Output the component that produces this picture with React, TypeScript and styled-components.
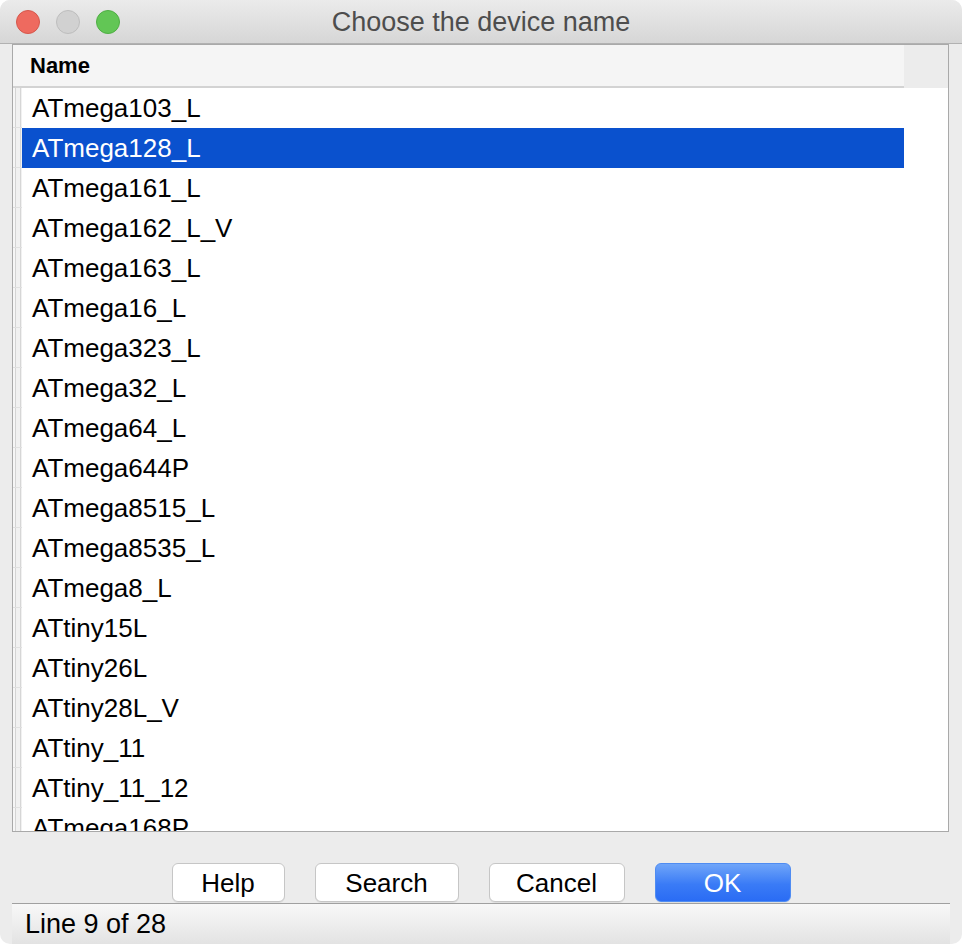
import React from "react";
import styled, { createGlobalStyle } from "styled-components";

const GlobalStyle = createGlobalStyle`
  html, body {
    margin: 0;
    padding: 0;
    background: #ffffff;
  }
  body {
    font-family: "Liberation Sans", Arial, Helvetica, sans-serif;
    -webkit-font-smoothing: antialiased;
  }
`;

const Window = styled.div`
  width: 962px;
  height: 944px;
  display: flex;
  flex-direction: column;
  background: #ececec;
  border-radius: 10px;
  overflow: hidden;
  font-family: "Liberation Sans", Arial, Helvetica, sans-serif;
`;

const TitleBar = styled.div`
  height: 43px;
  flex: none;
  display: grid;
  grid-template-columns: 120px 1fr 120px;
  align-items: center;
  background: linear-gradient(to bottom, #ebebeb 0%, #d6d6d6 100%);
  border-bottom: 1px solid #b1b1b1;
`;

const Lights = styled.div`
  display: flex;
  gap: 16px;
  padding-left: 16px;
  align-items: center;
`;

const Light = styled.span<{ $fill: string; $edge: string }>`
  width: 24px;
  height: 24px;
  border-radius: 50%;
  box-sizing: border-box;
  background: ${(p) => p.$fill};
  border: 1px solid ${(p) => p.$edge};
`;

const Title = styled.div`
  text-align: center;
  font-size: 27px;
  line-height: 43px;
  padding-top: 1px;
  color: #4d4d4d;
  white-space: nowrap;
`;

const Body = styled.div`
  flex: 1;
  display: flex;
  flex-direction: column;
  min-height: 0;
`;

const Table = styled.div`
  margin: 0 13px 0 12px;
  height: 788px;
  box-sizing: border-box;
  border: 1px solid #a9a9a9;
  background: #ffffff;
  display: flex;
  flex-direction: column;
  overflow: hidden;
`;

const HeaderRow = styled.div`
  height: 43px;
  flex: none;
  display: flex;
  background: #ececec;
`;

const HeaderCell = styled.div`
  width: 891px;
  box-sizing: border-box;
  height: 43px;
  background: #f5f5f5;
  border-bottom: 2px solid #d3d3d3;
  padding-left: 17px;
  font-size: 22px;
  font-weight: 600;
  line-height: 41px;
  color: #000;
`;

const Rows = styled.div`
  flex: 1;
  overflow: hidden;
`;

const Row = styled.div`
  display: flex;
  height: 40px;
`;

const RowHeader = styled.div`
  width: 9px;
  flex: none;
  box-sizing: border-box;
  background: linear-gradient(
    to right,
    #f6f6f6 0 2px,
    #d4d4d4 2px 3px,
    #f1f1f1 3px 7px,
    #d6d6d6 7px 8px,
    #f1f1f1 8px 9px
  );
  border-bottom: 1px solid #e0e0e0;
`;

const Cell = styled.div<{ $selected: boolean }>`
  width: 882px;
  flex: none;
  padding-left: 10px;
  box-sizing: border-box;
  font-size: 26px;
  line-height: 40px;
  white-space: nowrap;
  color: ${(p) => (p.$selected ? "#ffffff" : "#000000")};
  background: ${(p) => (p.$selected ? "#0a51ce" : "transparent")};
`;

const ButtonBar = styled.div`
  height: 71px;
  flex: none;
  display: flex;
  justify-content: center;
  align-items: flex-end;
  gap: 30px;
  padding-bottom: 1px;
  box-sizing: border-box;
`;

const Button = styled.button<{ $w: number; $primary?: boolean }>`
  width: ${(p) => p.$w}px;
  height: 39px;
  box-sizing: border-box;
  border-radius: 6px;
  font-family: "Liberation Sans", Arial, Helvetica, sans-serif;
  font-size: 26px;
  line-height: 35px;
  padding: 2px 0 0;
  text-align: center;
  cursor: default;
  color: ${(p) => (p.$primary ? "#ffffff" : "#000000")};
  border: 1px solid ${(p) => (p.$primary ? "#4f8cf2" : "#c6c6c6")};
  background: ${(p) =>
    p.$primary
      ? "linear-gradient(to bottom, #6fa5f9 0%, #3a7bf6 55%, #2a6cf4 100%)"
      : "#ffffff"};
  box-shadow: 0 1px 0 rgba(0, 0, 0, 0.06);
`;

const StatusBar = styled.div`
  height: 41px;
  flex: none;
  margin: 0 12px;
  box-sizing: border-box;
  border-top: 1px solid #a0a0a0;
  background: linear-gradient(to bottom, #f8f8f8 0%, #e3e3e3 100%);
  padding-left: 13px;
  font-size: 27px;
  line-height: 40px;
  color: #000;
  overflow: hidden;
`;

const devices = [
  "ATmega103_L",
  "ATmega128_L",
  "ATmega161_L",
  "ATmega162_L_V",
  "ATmega163_L",
  "ATmega16_L",
  "ATmega323_L",
  "ATmega32_L",
  "ATmega64_L",
  "ATmega644P",
  "ATmega8515_L",
  "ATmega8535_L",
  "ATmega8_L",
  "ATtiny15L",
  "ATtiny26L",
  "ATtiny28L_V",
  "ATtiny_11",
  "ATtiny_11_12",
  "ATmega168P",
];

const selectedIndex = 1;

export default function App() {
  return (
    <>
      <GlobalStyle />
      <Window>
        <TitleBar>
          <Lights>
            <Light $fill="#ee6a5f" $edge="#d5574c" />
            <Light $fill="#d1d1d1" $edge="#bdbdbd" />
            <Light $fill="#62c655" $edge="#4fae44" />
          </Lights>
          <Title>Choose the device name</Title>
          <div />
        </TitleBar>
        <Body>
          <Table>
            <HeaderRow>
              <HeaderCell>Name</HeaderCell>
            </HeaderRow>
            <Rows>
              {devices.map((d, i) => (
                <Row key={d}>
                  <RowHeader />
                  <Cell $selected={i === selectedIndex}>{d}</Cell>
                </Row>
              ))}
            </Rows>
          </Table>
          <ButtonBar>
            <Button $w={113}>Help</Button>
            <Button $w={144}>Search</Button>
            <Button $w={136}>Cancel</Button>
            <Button $w={136} $primary>
              OK
            </Button>
          </ButtonBar>
          <StatusBar>Line 9 of 28</StatusBar>
        </Body>
      </Window>
    </>
  );
}
